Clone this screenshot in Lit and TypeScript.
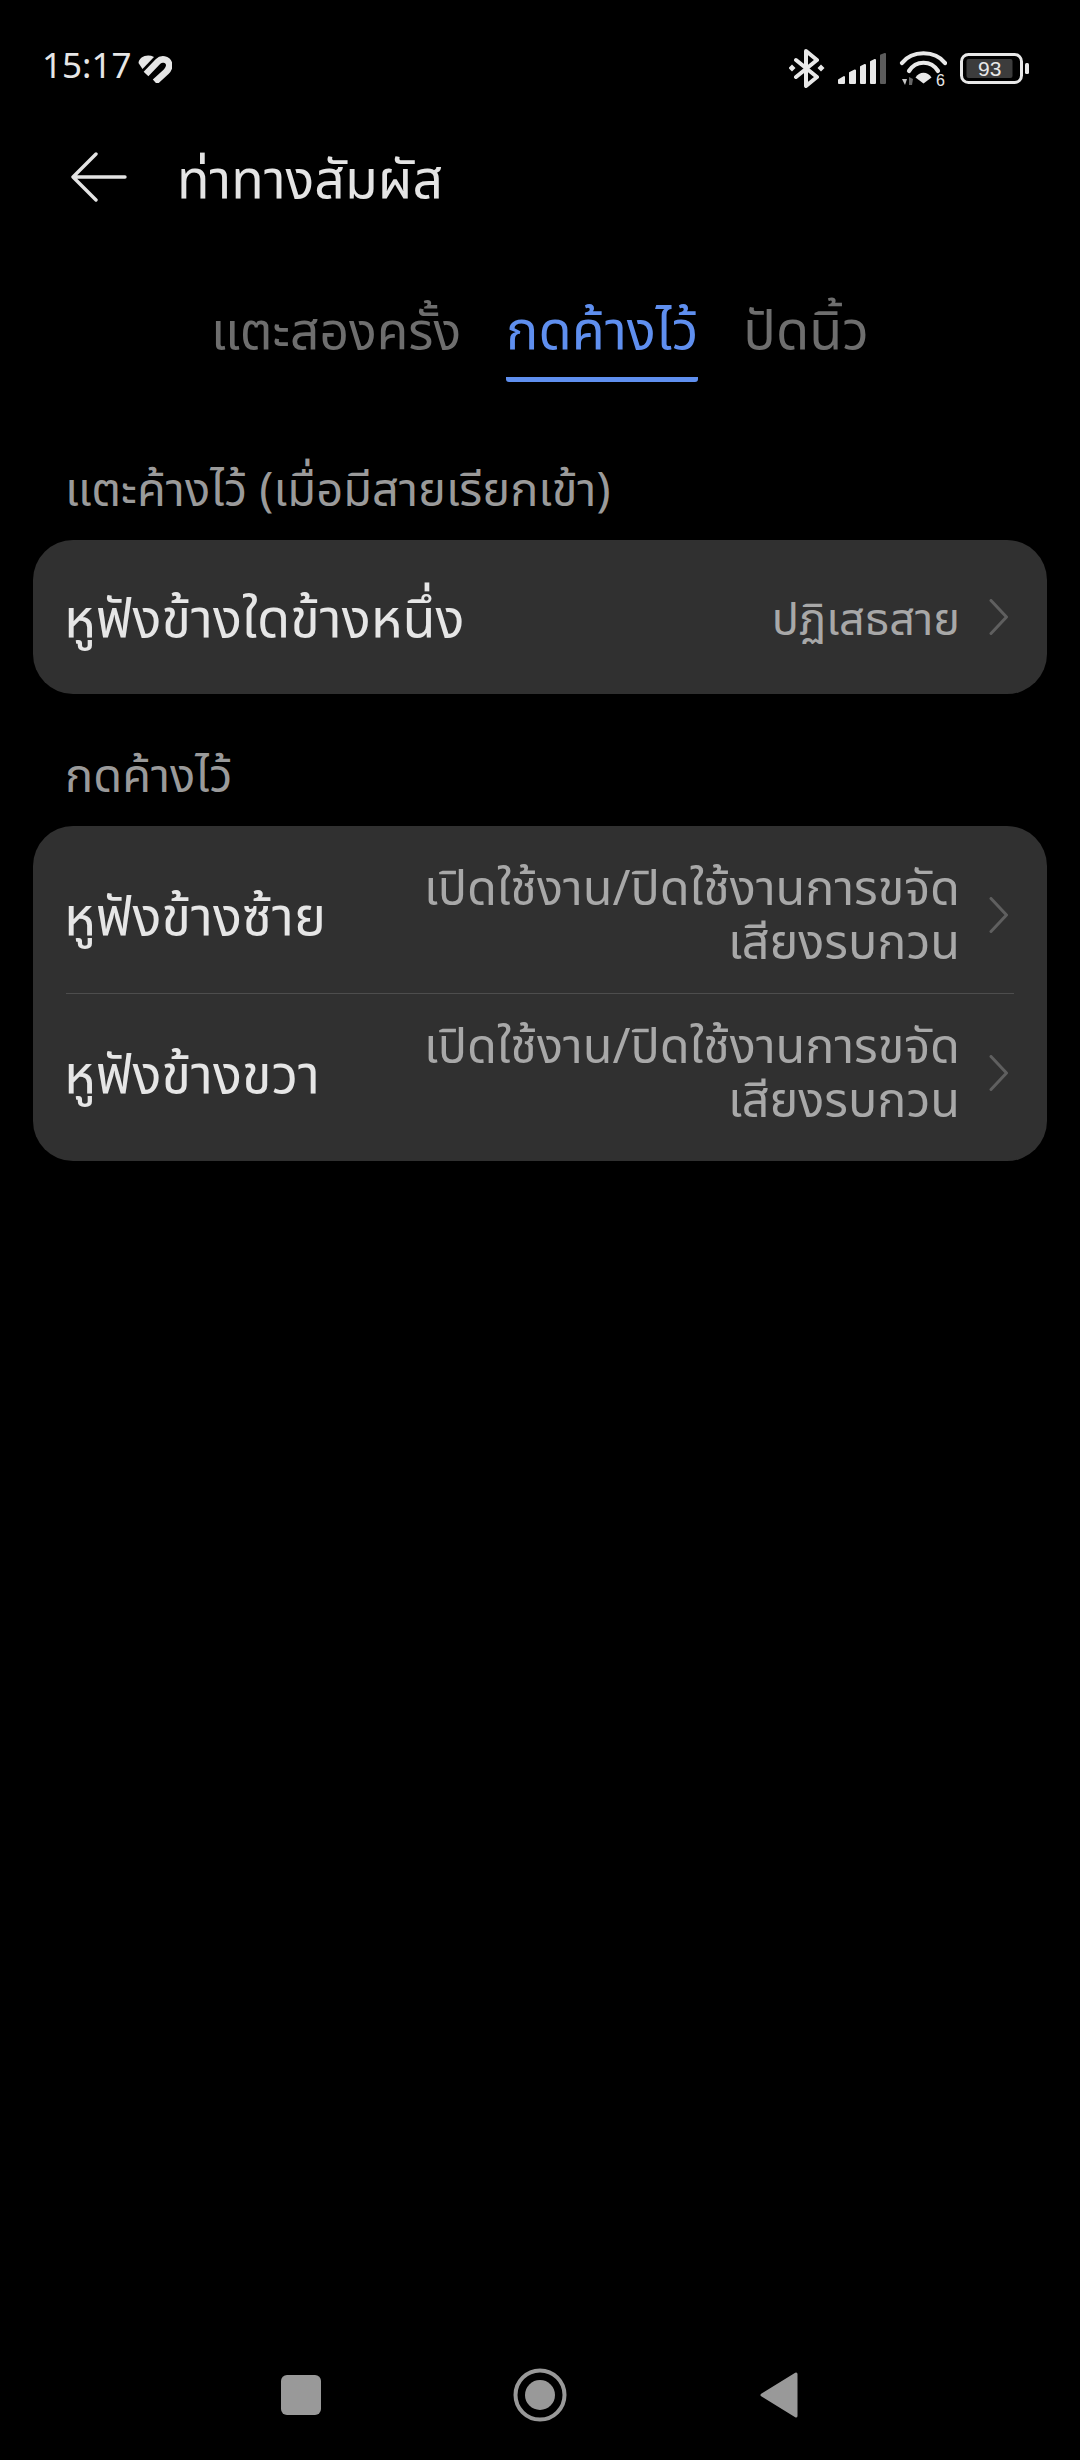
import { LitElement, html, css, unsafeCSS } from 'lit';
import { customElement } from 'lit/decorators.js';

const FONT = unsafeCSS(`"Noto Sans Thai", "Noto Sans", "DejaVu Sans", sans-serif`);

const chevron = html`<svg class="chevron" width="20" height="36" viewBox="0 0 20 36">
  <path d="M2 1.5 L17.5 18 L2 34.5" fill="none" stroke="#5f5f5f" stroke-width="3" stroke-linecap="round" stroke-linejoin="round"/>
</svg>`;

const NOISE = 'เปิดใช้งาน/ปิดใช้งานการขจัดเสียงรบกวน';

@customElement('app-root')
export class AppRoot extends LitElement {
  static styles = css`
    :host {
      display: block;
      width: 1080px;
      height: 2460px;
      background: #000;
      font-family: ${FONT};
    }
    .page {
      display: flex;
      flex-direction: column;
      height: 2460px;
    }
    .status {
      display: flex;
      align-items: center;
      justify-content: space-between;
      height: 48px;
      margin-top: 44px;
      padding: 0 50px 0 42px;
    }
    .time {
      display: flex;
      align-items: center;
      gap: 7px;
      color: #e6e6e6;
      font-size: 35px;
      line-height: 48px;
    }
    .status-icons {
      display: flex;
      align-items: center;
      gap: 13px;
    }
    .icon-num {
      fill: #e8e8e8;
      font-family: "Liberation Sans", sans-serif;
    }
    .title-bar {
      display: flex;
      align-items: center;
      height: 84px;
      margin-top: 43px;
      padding-left: 71px;
      gap: 50px;
      color: #e4e4e4;
      font-size: 53.5px;
    }
    .title-text { padding-top: 8px; }
    .tabs {
      display: flex;
      justify-content: center;
      gap: 45px;
      margin-top: 76px;
    }
    .tab {
      height: 87px;
      line-height: 76px;
      color: #6e6e6e;
      font-size: 51.5px;
      box-sizing: border-box;
      white-space: nowrap;
    }
    .tab.wide { font-size: 54px; }
    .tab.on {
      color: #5f8fef;
      font-size: 54px;
      border-bottom: 5px solid #5f8fef;
      border-radius: 0 0 3px 3px;
    }
    .section {
      padding: 0 65px;
      color: #9a9a9a;
      font-size: 47px;
      line-height: 60px;
    }
    .section.first { margin-top: 80px; }
    .section.second { margin-top: 54px; }
    .card {
      margin: 18px 33px 0;
      background: #303030;
      border-radius: 40px;
      padding: 0 33px;
    }
    .card.multi { padding: 10px 33px; }
    .row {
      display: flex;
      align-items: center;
      justify-content: space-between;
      height: 157px;
    }
    .row.single { height: 154px; }
    .row.bordered {
      height: 158px;
      box-sizing: border-box;
      border-bottom: 1px solid #4d4d4d;
    }
    .label {
      color: #e6e6e6;
      font-size: 54px;
      white-space: nowrap;
      margin-left: -2px;
      padding-top: 7px;
    }
    .right {
      display: flex;
      align-items: center;
      gap: 29px;
      padding-right: 5px;
    }
    .value {
      max-width: 545px;
      text-align: right;
      color: #a8a8a8;
      font-size: 48.5px;
      line-height: 54px;
      padding-top: 7px;
    }
    .single .value { font-size: 45px; }
    .chevron { flex-shrink: 0; }
    .nav {
      display: flex;
      justify-content: center;
      align-items: center;
      margin-top: auto;
      padding-bottom: 38px;
    }
    .nav-slot {
      width: 239px;
      display: flex;
      justify-content: center;
    }
  `;

  private _row(label: string, value: string, cls: string) {
    return html`<div class="row ${cls}">
      <div class="label">${label}</div>
      <div class="right">
        <div class="value">${value}</div>
        ${chevron}
      </div>
    </div>`;
  }

  render() {
    return html`<div class="page">
      <div class="status">
        <div class="time">15:17
          <svg width="34" height="29" viewBox="0 0 34 29">
            <path d="M0.5 9 C1 3 9 -0.5 16 3 L4.5 15 Z" fill="#e6e6e6"/>
            <path d="M8 20 L20 7.5 C23.5 4 29.5 5 31 9.5 C32 13 30.5 15.5 28 18 L17 28" fill="none" stroke="#e6e6e6" stroke-width="6.5"/>
          </svg>
        </div>
        <div class="status-icons">
          <svg width="36" height="39" viewBox="0 0 36 39">
            <path d="M7 11 L28 28 L17 37 V2 L28 11 L7 28" fill="none" stroke="#e8e8e8" stroke-width="4" stroke-linejoin="round" stroke-linecap="round"/>
            <path d="M3 15.5 L6.5 19 L3 22.5 L-0.5 19 Z M32 15.5 L35.5 19 L32 22.5 L28.5 19 Z" fill="#e8e8e8"/>
          </svg>
          <svg width="48" height="31" viewBox="0 0 48 31">
            <path d="M1 30 V27 L6 24 V30 Z" fill="#e8e8e8" stroke="#e8e8e8" stroke-width="2" stroke-linejoin="round"/>
            <path d="M12 30 V20 L17 17.5 V30 Z" fill="#e8e8e8" stroke="#e8e8e8" stroke-width="2" stroke-linejoin="round"/>
            <path d="M23 30 V14 L27 12 V30 Z" fill="#e8e8e8" stroke="#e8e8e8" stroke-width="2" stroke-linejoin="round"/>
            <path d="M33 30 V9 L37 7 V30 Z" fill="#e8e8e8" stroke="#e8e8e8" stroke-width="2" stroke-linejoin="round"/>
            <path d="M43 30 V2.5 L47 1 V30 Z" fill="#5c5c5c" stroke="#5c5c5c" stroke-width="2" stroke-linejoin="round"/>
          </svg>
          <svg width="48" height="37" viewBox="0 0 48 37">
            <path d="M3 13 C13 0 36 0 46 13" fill="none" stroke="#e8e8e8" stroke-width="4.2" stroke-linecap="round"/>
            <path d="M10 21 C17 10 32 10 39 21" fill="none" stroke="#e8e8e8" stroke-width="4.2" stroke-linecap="round"/>
            <path d="M16.5 27.5 C20 21 29 21 32.5 27.5 L24.5 33.5 Z" fill="#e8e8e8"/>
            <path d="M3 29 H8 L6 35 Z" fill="#c8c8c8"/>
            <path d="M10 35 V27 L14 29 L13 35 Z" fill="#666"/>
            <text class="icon-num" x="37" y="35.5" font-size="16">6</text>
          </svg>
          <svg width="70" height="31" viewBox="0 0 70 31">
            <rect x="1.5" y="1.5" width="60" height="28" rx="7" fill="none" stroke="#e8e8e8" stroke-width="3"/>
            <rect x="6.5" y="6" width="46" height="19" rx="2" fill="#3c3c3c"/>
            <text class="icon-num" x="18" y="23" font-size="21">93</text>
            <rect x="65" y="10" width="4" height="11" rx="1.5" fill="#e8e8e8"/>
          </svg>
        </div>
      </div>

      <div class="title-bar">
        <svg width="56" height="50" viewBox="0 0 56 50">
          <path d="M25 2 L2 25 H54 M2 25 L25 48" fill="none" stroke="#e4e4e4" stroke-width="3.4" stroke-linecap="round" stroke-linejoin="round"/>
        </svg>
        <div class="title-text">ท่าทางสัมผัส</div>
      </div>

      <div class="tabs">
        <div class="tab">แตะสองครั้ง</div>
        <div class="tab on">กดค้างไว้</div>
        <div class="tab wide">ปัดนิ้ว</div>
      </div>

      <div class="section first">แตะค้างไว้ (เมื่อมีสายเรียกเข้า)</div>
      <div class="card">
        ${this._row('หูฟังข้างใดข้างหนึ่ง', 'ปฏิเสธสาย', 'single')}
      </div>

      <div class="section second">กดค้างไว้</div>
      <div class="card multi">
        ${this._row('หูฟังข้างซ้าย', NOISE, 'bordered')}
        ${this._row('หูฟังข้างขวา', NOISE, '')}
      </div>

      <div class="nav">
        <div class="nav-slot">
          <svg width="40" height="40" viewBox="0 0 40 40"><rect width="40" height="40" rx="6" fill="#999"/></svg>
        </div>
        <div class="nav-slot">
          <svg width="54" height="54" viewBox="0 0 54 54">
            <circle cx="27" cy="27" r="24.5" fill="none" stroke="#999" stroke-width="4"/>
            <circle cx="27" cy="27" r="15" fill="#999"/>
          </svg>
        </div>
        <div class="nav-slot">
          <svg width="38" height="46" viewBox="0 0 38 46"><path d="M36 2 V44 L2 23 Z" fill="#999" stroke="#999" stroke-width="3" stroke-linejoin="round"/></svg>
        </div>
      </div>
    </div>`;
  }
}
